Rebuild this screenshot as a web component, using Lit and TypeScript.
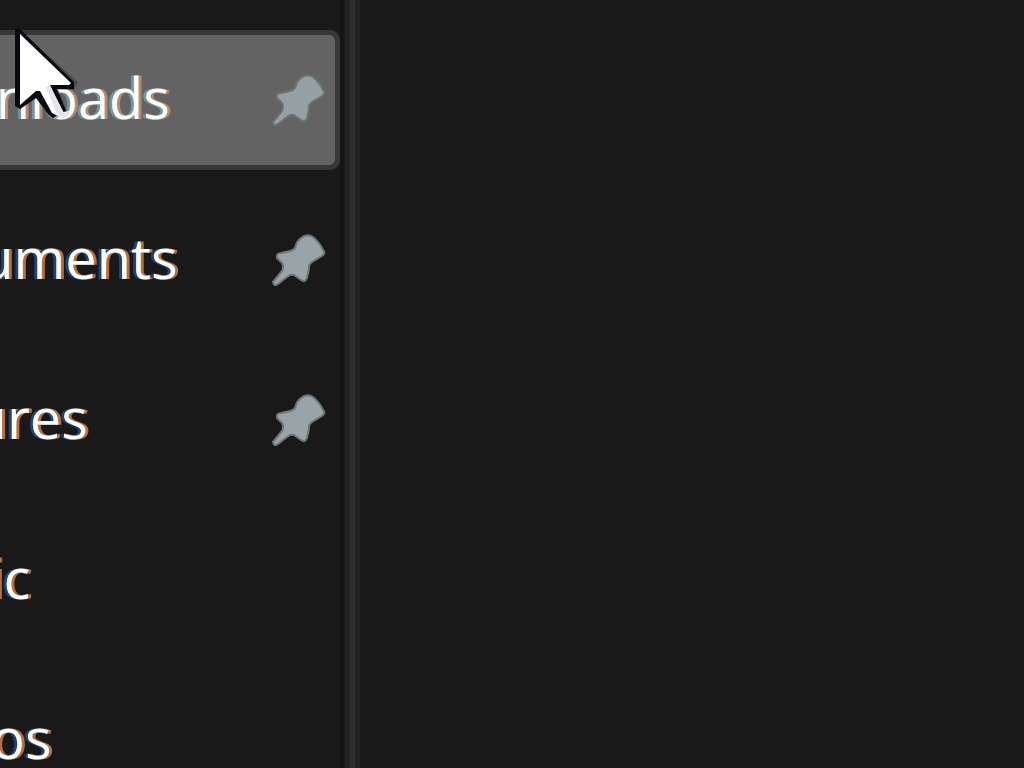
import { LitElement, html, css } from "lit";
import { customElement, state } from "lit/decorators.js";

interface Folder {
  name: string;
  pinned: boolean;
}

@customElement("pin-icon")
export class PinIcon extends LitElement {
  static styles = css`
    :host {
      display: block;
      flex: none;
    }
    .pin {
      display: block;
      width: 56px;
      height: 54px;
    }
  `;

  render() {
    return html`
      <svg class="pin" viewBox="0 0 56 54" aria-hidden="true">
        <path
          d="M31 5 Q37 0 43 4 Q50 10 53 17 Q56 20 52 23 L42 29 Q38 32 39 36 L37 45 Q35 50 31 47 L24 42 Q20 41 17 44 L8 51 Q4 54 3 49 L12 38 Q14 34 12 30 L7 25 Q6 20 11 20 L20 18 Q25 17 26 12 Q27 8 31 5 Z"
          fill="#99a4a9"
          stroke="#6d7578"
          stroke-width="2"
          stroke-linejoin="round"
        />
      </svg>
    `;
  }
}

@customElement("app-root")
export class AppRoot extends LitElement {
  @state() private current = "Downloads";

  private folders: Folder[] = [
    { name: "Downloads", pinned: true },
    { name: "Documents", pinned: true },
    { name: "Pictures", pinned: true },
    { name: "Music", pinned: false },
    { name: "Videos", pinned: false },
  ];

  static styles = css`
    :host {
      display: block;
      position: relative;
      height: 100vh;
      overflow: hidden;
      background: #191919;
      font-family: "Open Sans", "Noto Sans", sans-serif;
    }
    .window {
      display: grid;
      grid-template-columns: 340px 20px 1fr;
      height: 100%;
    }
    .sidebar {
      display: flex;
      flex-direction: column;
      gap: 20px;
      padding-top: 30px;
      margin-left: -160px;
      min-height: 0;
    }
    .item {
      box-sizing: border-box;
      display: flex;
      flex: none;
      align-items: center;
      justify-content: space-between;
      width: 100%;
      height: 140px;
      margin: 0;
      padding: 0 9px 0 33px;
      border: 5px solid transparent;
      border-radius: 10px;
      background: transparent;
      color: #f6fffa;
      font: 400 56px/76px "Open Sans", "Noto Sans", sans-serif;
      text-align: left;
      text-shadow: -3px 0 #20407f, 3px 0 #b8703c;
    }
    .item.current {
      border-color: #383838;
      background: #636363;
      background-clip: padding-box;
      text-shadow: -3px 0 #7391a8, 3px 0 #b98a6c;
    }
    .item.current pin-icon {
      opacity: 0.95;
    }
    .label {
      padding-bottom: 6px;
    }
    .divider {
      border-left: 5px solid #151515;
      background: linear-gradient(
        to right,
        #222222 0 5px,
        #2d2d2d 5px 10px,
        #222222 10px 15px
      );
    }
    .pointer {
      position: absolute;
      left: 10px;
      top: 24px;
      width: 72px;
      height: 100px;
      pointer-events: none;
    }
  `;

  render() {
    return html`
      <div class="window">
        <nav class="sidebar" aria-label="Quick access">
          ${this.folders.map(
            (folder) => html`
              <button
                class="item ${folder.name === this.current ? "current" : ""}"
                @click=${() => (this.current = folder.name)}
              >
                <span class="label">${folder.name}</span>
                ${folder.pinned ? html`<pin-icon></pin-icon>` : ""}
              </button>
            `
          )}
        </nav>
        <div class="divider"></div>
        <main></main>
      </div>
      <svg class="pointer" viewBox="10 24 72 100" aria-hidden="true">
        <path
          d="M18 29 L78 82 L74 90 H59 L67 112 L56 119 L48 114 L37 98 L20 109 Z"
          fill="#151515"
          opacity="0.3"
        />
        <path
          d="M15 29 H20 L74 82 V89 H57 L66 111 L53 118 L48 114 L36 98 L20 109 L15 106 Z"
          fill="#080a10"
        />
        <path
          d="M20 34 L71 83 L69 85 H50 L63 112 L70 111 Q68 118 62 118 L52 113 L40 91 L36 91 L20 105 Z"
          fill="#ffffff"
        />
        <path d="M46 87 L50 86 L64 113 L70 111 Q68 118 62 118 L57 115 Z" fill="#e4e4ec" />
      </svg>
    `;
  }
}
